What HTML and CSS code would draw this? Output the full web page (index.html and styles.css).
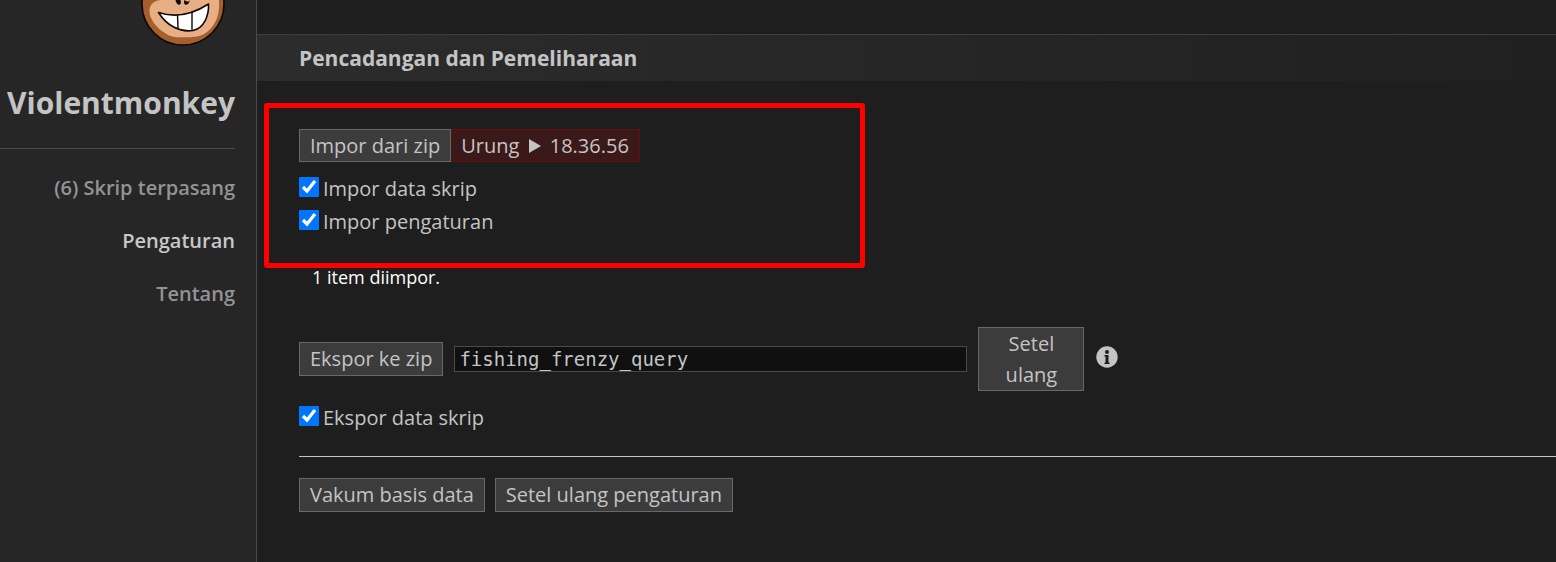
FILE: index.html
```html
<!DOCTYPE html>
<html lang="id">
<head>
<meta charset="utf-8">
<title>Violentmonkey</title>
<meta name="viewport" content="width=device-width, initial-scale=1">
<link rel="stylesheet" href="styles.css">
</head>
<body>
<div class="page">
  <aside class="sidebar">
    <svg class="logo" viewBox="0 0 90 47" aria-hidden="true">
      <circle cx="45" cy="4" r="41" fill="#a55f2f" stroke="#0c0806" stroke-width="1.6"/>
      <path d="M22 0C16 1 12 4 11.500 10C11 20 20 29 27 33C32 37 39 37.500 45 37.300C53 37 62 38 69 32C78 25 82 14 81 0Z" fill="#e8ae84"/>
      <path d="M37.500 0C38 3 39.500 4.800 41.200 4.800C42.800 4.800 43.400 2.500 42.500 0ZM51.500 0C52 2 49.500 2 46.300 0C45.600 2.500 46.200 4.800 47.800 4.800C49.800 4.800 51.500 3 52 0Z" fill="#100b08"/>
      <path d="M20.500 12.500C37 18 55 14 70.500 4C71 16 66 28 55 30.500C42 32.500 29 26 20.500 12.500Z" fill="#fff" stroke="#0c0806" stroke-width="1.600" stroke-linejoin="round"/>
      <path d="M39.500 15L40 28M54 11.500V30" fill="none" stroke="#0c0806" stroke-width="1.400"/>
    </svg>
    <h1 class="brand">Violentmonkey</h1>
    <hr class="divider">
    <nav class="nav">
      <a href="#scripts">(6) Skrip terpasang</a>
      <a href="#settings" class="active">Pengaturan</a>
      <a href="#about">Tentang</a>
    </nav>
  </aside>
  <main class="content">
    <h2 class="section-title">Pencadangan dan Pemeliharaan</h2>
    <section class="import">
      <div class="buttons">
        <button type="button" class="btn">Impor dari zip</button><button type="button" class="btn undo">Urung <svg class="play" viewBox="0 0 12 14" aria-hidden="true"><path d="M0 0L12 7L0 14Z" fill="currentColor"/></svg> 18.36.56</button>
      </div>
      <label class="check"><input type="checkbox" checked><span>Impor data skrip</span></label>
      <label class="check"><input type="checkbox" checked><span>Impor pengaturan</span></label>
    </section>
    <p class="report">1 item diimpor.</p>
    <section class="export">
      <div class="export-row">
        <button type="button" class="btn">Ekspor ke zip</button>
        <input class="filename" type="text" value="fishing_frenzy_query" aria-label="Nama berkas">
        <button type="button" class="btn reset">Setel ulang</button>
        <svg class="info" viewBox="0 0 22 22" role="img" aria-label="Info"><circle cx="11" cy="11" r="10.700" fill="#c4c4c4"/><circle cx="11" cy="6" r="2" fill="#1e1e1e"/><path d="M8.500 9H12.500V16.500H13.500V18H8.500V16.500H9.500V10.500H8.500Z" fill="#1e1e1e"/></svg>
      </div>
      <label class="check"><input type="checkbox" checked><span>Ekspor data skrip</span></label>
    </section>
    <hr class="rule">
    <div class="buttons maintenance">
      <button type="button" class="btn">Vakum basis data</button>
      <button type="button" class="btn">Setel ulang pengaturan</button>
    </div>
  </main>
</div>
</body>
</html>
```
FILE: styles.css
```css
* { box-sizing: border-box; }
body {
  margin: 0;
  background: #1e1e1e;
  color: #c4c4c4;
  font: 20px/32px "Open Sans", "Noto Sans", sans-serif;
}
.page { display: flex; min-height: 100vh; }
.sidebar {
  flex: 0 0 257px;
  padding-right: 21px;
  background: #262626;
  border-right: 1px solid #4a4a4a;
  display: flex;
  flex-direction: column;
}
.logo { width: 90px; height: 47px; align-self: flex-end; margin-right: 7px; }
.brand {
  margin: 36px 0 0;
  font-size: 30px;
  line-height: 40px;
  font-weight: 700;
  text-align: right;
  white-space: nowrap;
}
.divider { width: 100%; margin: 25px 0 23px; border: 0; border-top: 1px solid #4a4a4a; }
.nav { display: flex; flex-direction: column; gap: 21px; text-align: right; }
.nav a { color: #939393; font-weight: 600; font-size: 20px; text-decoration: none; white-space: nowrap; }
.nav .active { color: #c8c8c8; }
.content { flex: 1; min-width: 0; padding-top: 34px; }
.section-title {
  margin: 0;
  padding: 7px 42px;
  border-top: 1px solid #3e3e3e;
  background: linear-gradient(to right, #2c2c2c, #202020);
  font-size: 21px;
  line-height: 32px;
  font-weight: 700;
}
.import {
  max-width: 601px;
  margin: 22px 0 0 7px;
  padding: 21px 30px 25px;
  border: 5px solid #f00;
  border-radius: 3px;
}
.buttons { display: flex; margin-bottom: 10px; }
.btn {
  padding: 0 10px;
  border: 1px solid #686868;
  background: #3c3c3c;
  color: #c4c4c4;
  font: inherit;
}
.import .btn { line-height: 31px; }
.import .undo { border-color: #680c0c; border-left: 0; background: #3c1919; }
.play { width: 12px; height: 14px; margin: 0 4px; }
.check { display: flex; align-items: center; gap: 4px; width: fit-content; height: 33px; }
.check input { width: 20px; height: 20px; margin: 0 0 4px; flex: none; }
.report { margin: 0 0 0 55px; color: #fff; font-size: 18px; line-height: 18px; }
.export { padding: 41px 42px 0; }
.export-row { display: flex; align-items: center; margin-bottom: 10px; }
.filename {
  flex: 0 1 513px;
  min-width: 0;
  height: 26px;
  margin: 0 11px;
  padding: 0 4px;
  border: 1px solid #4a4a4a;
  background: #101010;
  color: #c4c4c4;
  font: 19px/26px "DejaVu Sans Mono", monospace;
}
.reset { width: 106px; padding: 0 20px; line-height: 31px; }
.info { width: 22px; height: 22px; margin: 0 0 4px 12px; flex: none; }
.rule { margin: 22px 0 21px 42px; border: 0; border-top: 1px solid #c4c4c4; }
.maintenance { gap: 10px; margin-left: 42px; }
```
